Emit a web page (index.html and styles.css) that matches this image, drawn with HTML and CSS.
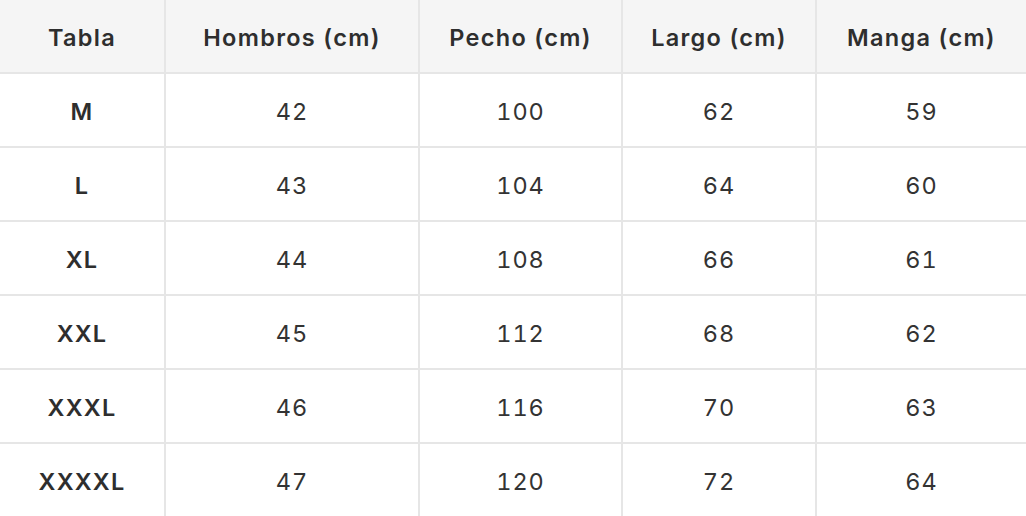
FILE: index.html
```html
<!DOCTYPE html>
<html lang="es">
<head>
<meta charset="utf-8">
<title>Tabla de tallas</title>
<link rel="stylesheet" href="styles.css">
</head>
<body>
<div class="size-table" role="table">
  <div class="cell head first" role="columnheader">Tabla</div>
  <div class="cell head" role="columnheader">Hombros (cm)</div>
  <div class="cell head" role="columnheader">Pecho (cm)</div>
  <div class="cell head" role="columnheader">Largo (cm)</div>
  <div class="cell head" role="columnheader">Manga (cm)</div>

  <div class="cell body first size">M</div>
  <div class="cell body">42</div>
  <div class="cell body">100</div>
  <div class="cell body">62</div>
  <div class="cell body">59</div>

  <div class="cell body first size">L</div>
  <div class="cell body">43</div>
  <div class="cell body">104</div>
  <div class="cell body">64</div>
  <div class="cell body">60</div>

  <div class="cell body first size">XL</div>
  <div class="cell body">44</div>
  <div class="cell body">108</div>
  <div class="cell body">66</div>
  <div class="cell body">61</div>

  <div class="cell body first size">XXL</div>
  <div class="cell body">45</div>
  <div class="cell body">112</div>
  <div class="cell body">68</div>
  <div class="cell body">62</div>

  <div class="cell body first size">XXXL</div>
  <div class="cell body">46</div>
  <div class="cell body">116</div>
  <div class="cell body">70</div>
  <div class="cell body">63</div>

  <div class="cell body first size">XXXXL</div>
  <div class="cell body">47</div>
  <div class="cell body">120</div>
  <div class="cell body">72</div>
  <div class="cell body">64</div>
</div>
</body>
</html>
```

FILE: styles.css
```css
html, body {
  margin: 0;
  padding: 0;
  background: #ffffff;
}

body {
  font-family: Inter, "Noto Sans", "Liberation Sans", sans-serif;
  color: #333333;
  overflow: hidden;
}

.size-table {
  display: grid;
  grid-template-columns: 164px 254px 203px 194px 211px;
  width: 1026px;
}

.cell {
  box-sizing: border-box;
  display: flex;
  align-items: center;
  justify-content: center;
  font-size: 23.5px;
  border-left: 2px solid #e6e6e6;
  padding-top: 2px;
}

.cell.first {
  border-left: none;
}

.head {
  height: 72px;
  background: #f5f5f5;
  font-weight: 600;
  color: #2e2e2e;
  letter-spacing: 1.3px;
}

.body {
  height: 74px;
  border-top: 2px solid #e6e6e6;
  font-weight: 400;
  font-variant-numeric: tabular-nums;
  letter-spacing: 1px;
}

.size {
  font-weight: 600;
  color: #2e2e2e;
  letter-spacing: 1.2px;
}
```
